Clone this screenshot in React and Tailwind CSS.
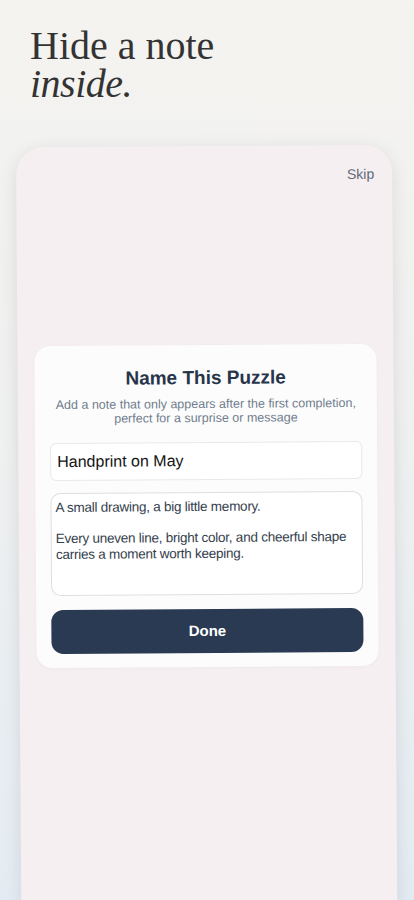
import React, { useState } from 'react'

export default function App() {
  const [name, setName] = useState('Handprint on May')
  const [note, setNote] = useState(
    'A small drawing, a big little memory.\n\nEvery uneven line, bright color, and cheerful shape carries a moment worth keeping.'
  )

  return (
    <div className="h-[900px] w-full overflow-hidden bg-gradient-to-b from-[#f4f3f0] via-[#eff0f0] to-[#e4ecf3] font-['Liberation_Sans',Arial,sans-serif]">
      {/* Heading */}
      <div className="px-[30px] pt-[27px] h-[146px]">
        <h1 className="font-['Liberation_Serif','Times_New_Roman',serif] text-[40px] leading-[38px] text-[#333333] font-normal">
          <span className="block">Hide a note</span>
          <em className="block italic tracking-[-0.5px]">inside.</em>
        </h1>
      </div>

      {/* Phone card */}
      <div className="ml-[16px] w-[376px] h-[780px] rounded-[28px] bg-[#f6eff1] shadow-[0_4px_18px_rgba(0,0,0,0.10)] rotate-[-0.4deg] origin-top">
        <div className="flex justify-end pt-[19px] pr-[18px]">
          <button className="text-[14px] text-[#5d6878]">Skip</button>
        </div>

        {/* Modal */}
        <div className="mx-[17px] mt-[159px] rounded-[16px] bg-[#fcfcfc] px-[15px] pt-[21px] pb-[14px] shadow-[0_1px_4px_rgba(0,0,0,0.03)]">
          <h2 className="text-center text-[19px] leading-[24px] font-bold text-[#27354a]">
            Name This Puzzle
          </h2>
          <p className="mt-[7px] text-center text-[12.5px] leading-[14px] text-[#707c8c]">
            Add a note that only appears after the first completion,
            <br />
            perfect for a surprise or message
          </p>

          <input
            value={name}
            onChange={(e) => setName(e.target.value)}
            className="mt-[17px] block w-full h-[38px] rounded-[6px] border border-[#e9e9ea] bg-white px-[6px] text-[16px] text-[#141414] outline-none"
          />

          <textarea
            value={note}
            onChange={(e) => setNote(e.target.value)}
            className="mt-[12px] block w-full h-[103px] resize-none rounded-[10px] border border-[#dedfe1] bg-white px-[4px] pt-[6px] text-[13.5px] leading-[15.5px] tracking-[-0.25px] text-[#343e4c] outline-none"
          />

          <button className="mt-[14px] w-full h-[44px] rounded-[12px] bg-[#2a3a52] text-[15px] font-bold text-white">
            Done
          </button>
        </div>
      </div>
    </div>
  )
}
